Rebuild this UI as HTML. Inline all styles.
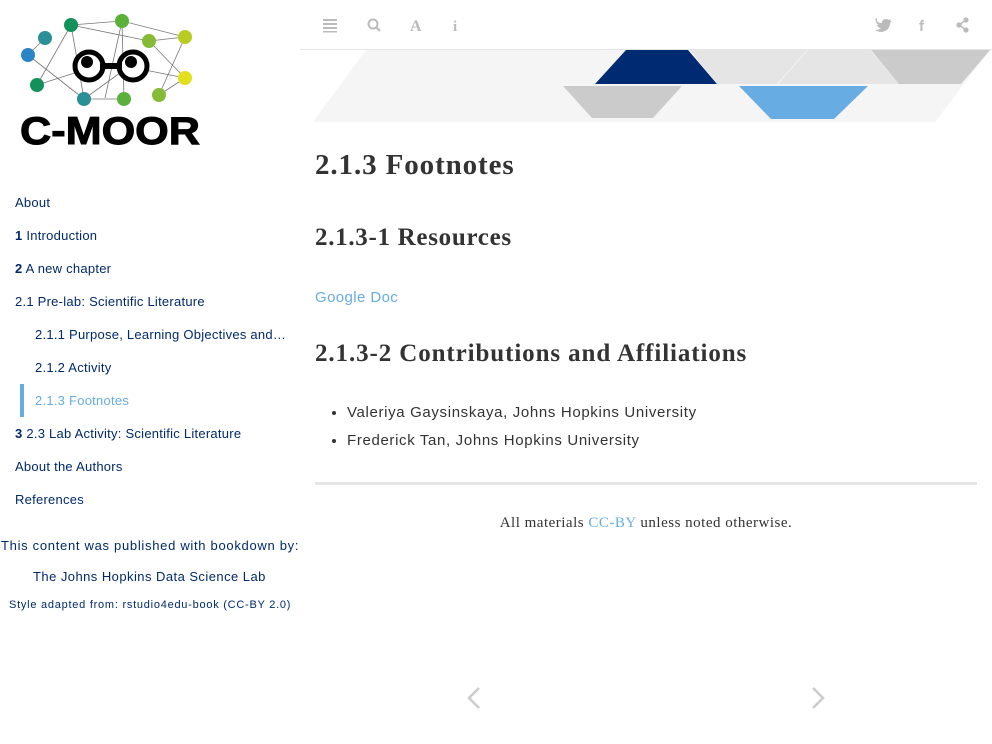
<!DOCTYPE html>
<html><head><meta charset="utf-8"><style>
*{margin:0;padding:0;box-sizing:border-box}
body{width:992px;height:744px;background:#fff;font-family:"Liberation Sans",sans-serif;position:relative;overflow:hidden}
.side{position:absolute;left:0;top:0;width:300px;height:744px}
.nav div{position:absolute;font-size:13px;color:#002a6c;white-space:nowrap;letter-spacing:0.25px}
.nav b{font-weight:bold}
.top{position:absolute;left:300px;top:0;width:692px;height:50px;border-bottom:1px solid #e5e5e5}
h1,h2{font-family:"Liberation Serif",serif;color:#333;position:absolute;left:315px;font-weight:bold;white-space:nowrap}
</style></head><body>
<div class="side">
<svg width="300" height="160" style="position:absolute;left:0;top:0">
<g stroke="#777" stroke-width="0.8" fill="none">
<line x1="71" y1="25" x2="122" y2="21"/><line x1="71" y1="25" x2="37" y2="85"/><line x1="71" y1="25" x2="84" y2="99"/><line x1="45" y1="38" x2="28" y2="55"/><line x1="28" y1="55" x2="84" y2="99"/><line x1="122" y1="21" x2="185" y2="37"/><line x1="122" y1="21" x2="105" y2="98"/><line x1="122" y1="21" x2="124" y2="99"/><line x1="149" y1="41" x2="185" y2="37"/><line x1="149" y1="41" x2="185" y2="78"/><line x1="185" y1="37" x2="159" y2="95"/><line x1="185" y1="78" x2="159" y2="95"/><line x1="37" y1="85" x2="84" y2="70"/><line x1="84" y1="99" x2="124" y2="70"/><line x1="145" y1="70" x2="185" y2="78"/><line x1="71" y1="25" x2="149" y2="41"/><line x1="84" y1="99" x2="124" y2="99"/>
</g>
<g><circle cx="71" cy="25" r="7" fill="#12925a"/><circle cx="45" cy="38" r="7" fill="#2a8f96"/><circle cx="28" cy="55" r="7" fill="#2a85c6"/><circle cx="37" cy="85" r="7" fill="#12925a"/><circle cx="84" cy="99" r="7" fill="#2a8f96"/><circle cx="122" cy="21" r="7" fill="#5bb03a"/><circle cx="149" cy="41" r="7" fill="#86bb38"/><circle cx="185" cy="37" r="7" fill="#b9cc22"/><circle cx="185" cy="78" r="7" fill="#e2e01e"/><circle cx="159" cy="95" r="7" fill="#86bb38"/><circle cx="124" cy="99" r="7" fill="#5bb03a"/></g>
<circle cx="89" cy="66" r="14" fill="#fff" stroke="#000" stroke-width="5"/><circle cx="133" cy="66" r="14" fill="#fff" stroke="#000" stroke-width="5"/>
<rect x="100" y="63" width="22" height="6" fill="#000"/>
<circle cx="87" cy="62" r="6" fill="#000"/><circle cx="131" cy="62" r="6" fill="#000"/>
<text x="20" y="144" font-family="Liberation Sans" font-weight="bold" font-size="39" fill="#000" textLength="180" lengthAdjust="spacingAndGlyphs" stroke="#000" stroke-width="1">C-MOOR</text>
</svg>
<div class="nav">
<div style="left:15px;top:195px">About</div>
<div style="left:15px;top:228px"><b>1</b> Introduction</div>
<div style="left:15px;top:261px"><b>2</b> A new chapter</div>
<div style="left:15px;top:294px">2.1 Pre-lab: Scientific Literature</div>
<div style="left:35px;top:327px">2.1.1 Purpose, Learning Objectives and…</div>
<div style="left:35px;top:360px">2.1.2 Activity</div>
<div style="left:20px;top:384px;width:4px;height:33px;background:#67ace3"></div>
<div style="left:35px;top:393px;color:#67ace3">2.1.3 Footnotes</div>
<div style="left:15px;top:426px"><b>3</b> 2.3 Lab Activity: Scientific Literature</div>
<div style="left:15px;top:459px">About the Authors</div>
<div style="left:15px;top:492px">References</div>
<div style="left:1px;top:538px;letter-spacing:0.7px">This content was published with bookdown by:</div>
<div style="left:33px;top:569px;letter-spacing:0.45px">The Johns Hopkins Data Science Lab</div>
<div style="left:9px;top:599px;font-size:11px;letter-spacing:0.75px">Style adapted from: rstudio4edu-book (CC-BY 2.0)</div>
</div>
</div>
<div class="top"></div>
<svg width="992" height="50" style="position:absolute;left:0;top:0" fill="#bbb">
<rect x="323" y="19" width="14" height="2"/><rect x="323" y="23" width="14" height="2"/><rect x="323" y="27" width="14" height="2"/><rect x="323" y="31" width="14" height="1.5"/>
<circle cx="373" cy="24" r="4.5" fill="none" stroke="#bbb" stroke-width="2"/><line x1="376" y1="27" x2="380" y2="31" stroke="#bbb" stroke-width="2.2"/>
<text x="410" y="31" font-family="Liberation Serif" font-weight="bold" font-size="16">A</text>
<text x="453" y="31" font-family="Liberation Serif" font-weight="bold" font-size="15">i</text>
<path d="M875 20 q3 3 7 3 q0-4 4-4 q2 0 3 1 l2-1 -1 2 2-0 -2 2 q0 7-8 9 q-4 0-7-2 q4 0 6-2 q-3 0-4-3 h2 q-3-1-3-4 l2 1 q-2-2-1-5z"/>
<text x="919" y="31" font-family="Liberation Sans" font-weight="bold" font-size="15">f</text>
<circle cx="966" cy="20" r="2.6"/><circle cx="959" cy="25" r="2.6"/><circle cx="966" cy="30" r="2.6"/>
<path d="M966 20 L959 25 L966 30" stroke="#bbb" stroke-width="1.5" fill="none"/>
</svg>
<svg width="992" height="130" style="position:absolute;left:0;top:0">
<polygon points="366,50 990,50 935,122 313,122" fill="#f5f5f5"/>
<polygon points="626,50 688,50 717,84 595,84" fill="#002a72"/>
<polygon points="690,50 807,50 777,84 717,84" fill="#e5e5e5"/>
<polygon points="808,50 870,50 899,84 778,84" fill="#e5e5e5"/>
<polygon points="871,50 990,50 961,84 899,84" fill="#cbcbcb"/>
<polygon points="563,86 682,86 653,118 592,118" fill="#cbcbcb"/>
<polygon points="739,86 868,86 834,119 771,119" fill="#67ace3"/>
</svg>
<h1 style="top:149px;font-size:29px;letter-spacing:0.9px">2.1.3 Footnotes</h1>
<h2 style="top:224px;font-size:25px;letter-spacing:0.7px">2.1.3-1 Resources</h2>
<div style="position:absolute;left:315px;top:289px;font-size:15px;color:#67ace3;letter-spacing:0.4px">Google Doc</div>
<h2 style="top:340px;font-size:25px;letter-spacing:0.9px">2.1.3-2 Contributions and Affiliations</h2>
<ul style="position:absolute;left:347px;top:399px;font-size:15px;color:#333;line-height:28px;letter-spacing:0.65px">
<li>Valeriya Gaysinskaya, Johns Hopkins University</li>
<li>Frederick Tan, Johns Hopkins University</li>
</ul>
<div style="position:absolute;left:315px;top:482px;width:662px;height:3px;background:#e5e5e5"></div>
<div style="position:absolute;left:315px;top:515px;width:662px;text-align:center;font-family:'Liberation Serif',serif;font-size:15px;color:#333;letter-spacing:0.5px">All materials <span style="color:#67ace3">CC-BY</span> unless noted otherwise.</div>
<svg width="992" height="744" style="position:absolute;left:0;top:0;pointer-events:none">
<polyline points="479,688 469,698 479,708" fill="none" stroke="#ccc" stroke-width="2.5"/>
<polyline points="813,688 823,698 813,708" fill="none" stroke="#ccc" stroke-width="2.5"/>
</svg>
</body></html>
